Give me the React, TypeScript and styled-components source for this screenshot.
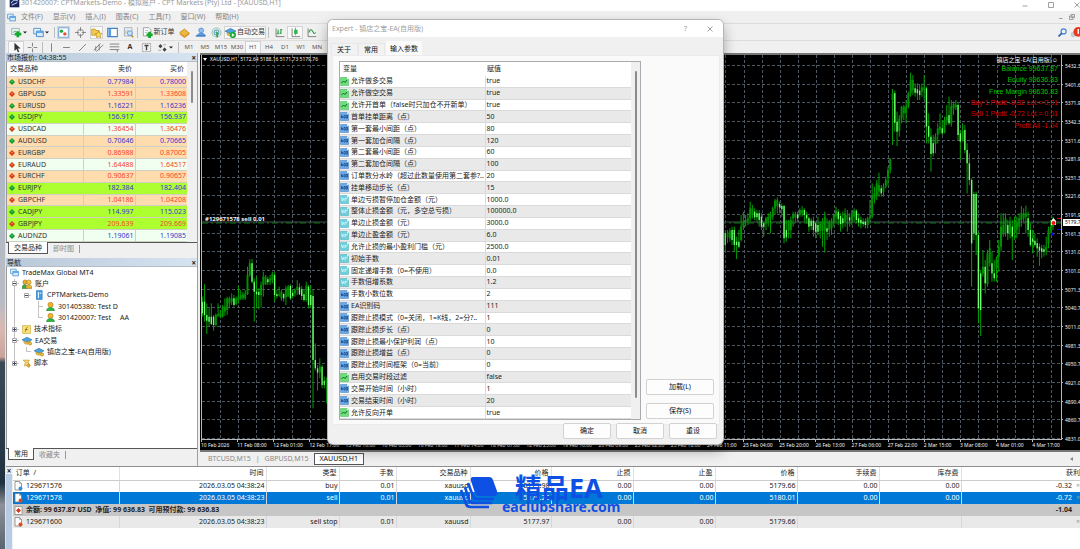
import React from 'react';
import styled, { createGlobalStyle } from 'styled-components';

const GlobalStyle = createGlobalStyle`
  * { box-sizing: border-box; }
  body {
    margin: 0;
    font: 7px/10px "Noto Sans", "Noto Sans CJK SC", sans-serif;
    color: #222;
    overflow: hidden;
  }
  button {
    font: inherit;
    color: inherit;
    background: none;
    border: 0;
    padding: 0;
    margin: 0;
    white-space: nowrap;
  }
  svg { display: block; flex: none; }
  table { border-collapse: collapse; table-layout: fixed; width: 100%; }
  th { font-weight: normal; }
  th, td { padding: 0; white-space: nowrap; overflow: hidden; }
  ul { list-style: none; margin: 0; padding: 0; }
`;

/* ---------- window frame ---------- */

const Desktop = styled.div`
  position: relative;
  display: flex;
  height: 100vh;
  padding-left: 5px;
  overflow: hidden;
  background: linear-gradient(#b4bfcc 0, #aab6c4 20%, #b9bcc4 55%, #d9b9b0 60%, #c9a49b 65%, #3b4a57 66%, #2a3c4a 80%, #1f3140 88%, #8d9199 92%, #5a6570 100%) left / 5px 100% no-repeat;
`;

const AppWindow = styled.div`
  flex: 1;
  min-width: 0;
  display: flex;
  flex-direction: column;
  background: #f0f0f0;
  border-left: 1px solid #dde3ea;
`;

const TitleBar = styled.header`
  display: flex;
  align-items: flex-end;
  height: 11px;
  padding: 0 0 3px 3px;
  background: #fff;
  color: #9a9a9a;
`;

const TitleText = styled.h1`
  flex: 1;
  margin: 0 0 0 1px;
  font-size: 7px;
  font-weight: normal;
  line-height: 10px;
  white-space: nowrap;
`;

const Controls = styled.div<{ $gap: number }>`
  display: flex;
  align-items: center;
  gap: ${(p) => p.$gap}px;
  color: #999;
`;

const MenuBar = styled.nav`
  display: flex;
  align-items: center;
  height: 12px;
  padding: 0 5px 0 1px;
  gap: 5px;
  color: #858585;
`;

const MenuList = styled.div`
  display: flex;
  gap: 10px;
`;

const Spacer = styled.div`
  flex: 1;
`;

const Toolbar = styled.div<{ $h: number }>`
  display: flex;
  align-items: center;
  height: ${(p) => p.$h}px;
  padding-left: 2px;
  border-top: 1px solid #dcdcdc;
`;

const Tool = styled.button<{ $w?: number; $on?: boolean }>`
  display: flex;
  align-items: center;
  justify-content: center;
  width: ${(p) => p.$w ?? 16}px;
  height: 13px;
  gap: 1px;
  color: #333;
  background: ${(p) => (p.$on ? '#f9f9f9' : 'none')};
  box-shadow: ${(p) => (p.$on ? 'inset 0 0 0 1px #d2d2d2' : 'none')};
`;

const Period = styled(Tool)`
  font-size: 6px;
  color: #555;
`;

const Divider = styled.span`
  width: 1px;
  height: 11px;
  margin: 0 2px;
  background: #bdbdbd;
`;

const Workspace = styled.main`
  flex: 1;
  min-height: 0;
  display: flex;
`;

const Sidebar = styled.aside`
  width: 192px;
  display: flex;
  flex-direction: column;
  gap: 4px;
  padding-bottom: 6px;
  border-right: 1px solid #a0a0a0;
  margin-right: 2px;
`;

const SidePanel = styled.section<{ $fill?: boolean }>`
  flex: ${(p) => (p.$fill ? 1 : 'none')};
  display: flex;
  flex-direction: column;
`;

const PanelTitle = styled.h2`
  display: flex;
  align-items: center;
  justify-content: space-between;
  height: 9px;
  margin: 0;
  padding: 0 1px;
  font-size: 7px;
  font-weight: normal;
  line-height: 9px;
  background: linear-gradient(90deg, #b9c8d8, #d6e4f2);
  border-bottom: 1px solid #b5bcc4;
`;

const CloseButton = styled.button`
  font-size: 8px;
  font-weight: bold;
  line-height: 7px;
`;

/* ---------- market watch ---------- */

const MarketBody = styled.div`
  display: flex;
  align-items: flex-start;
  background: #fff;
  border-left: 1px solid #999;
`;

const MarketTable = styled.table`
  height: 180px;
  thead tr { height: 14px; }
  th { text-align: right; border-bottom: 1px solid #ddd; padding-right: 3px; }
  th:first-child { text-align: left; padding-left: 3px; }
`;

const QuoteRow = styled.tr<{ $bg: string; $fg: string }>`
  background: ${(p) => p.$bg};
  td { border-bottom: 1px solid #cfd0c4; border-right: 1px solid #cfd0c4; text-align: right; padding-right: 1px; color: ${(p) => p.$fg}; }
  td:first-child { text-align: left; color: #333; padding-left: 2px; }
  td:last-child { border-right: 0; }
`;

const SymbolCell = styled.span`
  display: flex;
  align-items: center;
  gap: 3px;
`;

const ScrollTrack = styled.div<{ $w: number }>`
  flex: none;
  width: ${(p) => p.$w}px;
  align-self: stretch;
  padding: 9px 3px 0 4px;
  background: #f0f0f0;
`;

const ScrollThumb = styled.div<{ $h: number }>`
  width: 2px;
  height: ${(p) => p.$h}px;
  border-radius: 1px;
  background: #8b8b8b;
`;

const TabStrip = styled.div`
  display: flex;
  height: 12px;
  padding-left: 2px;
  border-top: 1px solid #555;
`;

const StripTab = styled.button<{ $on?: boolean }>`
  height: ${(p) => (p.$on ? 12 : 11)}px;
  margin-top: ${(p) => (p.$on ? -1 : 0)}px;
  padding: 0 5px;
  color: ${(p) => (p.$on ? '#222' : '#8a8a8a')};
  background: ${(p) => (p.$on ? '#fff' : 'none')};
  border: ${(p) => (p.$on ? '1px solid #555' : '0')};
  border-top: 0;
`;

const TabMark = styled.span`
  width: 1px;
  height: 8px;
  margin-top: 2px;
  background: #999;
`;

/* ---------- navigator ---------- */

const Tree = styled.div`
  flex: 1;
  background: #fff;
  border-left: 1px solid #999;
`;

const TreeRows = styled.ul`
  display: grid;
  grid-auto-rows: 1fr;
  height: 102px;
  background:
    linear-gradient(#c4c4c4, #c4c4c4) 7px 12px / 1px 84px no-repeat,
    linear-gradient(#c4c4c4, #c4c4c4) 31px 34px / 1px 17px no-repeat,
    linear-gradient(#c4c4c4, #c4c4c4) 19px 80px / 1px 5px no-repeat;
`;

const TreeItem = styled.li<{ $depth: number }>`
  display: flex;
  align-items: center;
  gap: 3px;
  padding-left: ${(p) => 3 + p.$depth * 12}px;
  white-space: pre;
`;

/* ---------- chart ---------- */

const ChartPane = styled.section`
  flex: 1;
  min-width: 0;
  display: flex;
  flex-direction: column;
`;

const ChartFrame = styled.div`
  flex: 1;
  min-height: 0;
  border: solid #777;
  border-width: 2px 0;
  background: #000;
  overflow: hidden;
`;

const ChartSvg = styled.svg`
  width: 100%;
  height: 100%;
`;

const ChartTabs = styled.div`
  display: flex;
  align-items: center;
  height: 14px;
  padding: 0 7px 1px 8px;
  gap: 5px;
  color: #8a8a8a;
`;

const ChartTab = styled.button<{ $on?: boolean }>`
  height: 12px;
  padding: 0 ${(p) => (p.$on ? 5 : 0)}px;
  color: ${(p) => (p.$on ? '#111' : '#8a8a8a')};
  background: ${(p) => (p.$on ? '#fff' : 'none')};
  border: ${(p) => (p.$on ? '1px solid #555' : '0')};
`;

/* ---------- terminal ---------- */

const Terminal = styled.section`
  display: flex;
  height: 83px;
  border-top: 1px solid #8e8e8e;
`;

const TerminalGrip = styled.div`
  width: 6px;
  margin-right: 1px;
  background: linear-gradient(#f0f0f0 7px, #b7cce4 7px);
  text-align: center;
`;

const TerminalBody = styled.div`
  flex: 1;
  min-width: 0;
  background: #fff;
`;

const OrderTable = styled.table`
  th { height: 13px; border-bottom: 1px solid #ccc; border-right: 1px solid #e2e2e2; text-align: right; padding-right: 2px; }
  th:first-child, td:first-child { text-align: left; padding-left: 1px; }
  th:last-child { border-right: 0; padding-right: 0; }
`;

const OrderRow = styled.tr<{ $tone: 'plain' | 'selected' | 'total' | 'pending' }>`
  height: 12px;
  background: ${(p) => ({ plain: '#fff', selected: '#0078d7', total: '#c6c6c6', pending: '#e9e9e9' })[p.$tone]};
  color: ${(p) => (p.$tone === 'selected' ? '#fff' : '#222')};
  font-weight: ${(p) => (p.$tone === 'total' ? 'bold' : 'normal')};
  td {
    text-align: right;
    padding-right: 1px;
    border-right: ${(p) => (p.$tone === 'total' ? '0' : '1px solid #d4d8dc')};
  }
  td:last-child { border-right: 0; padding-right: 0; }
`;

const OrderId = styled.span`
  display: flex;
  align-items: center;
  gap: 3px;
`;

const Profit = styled.span<{ $bare?: boolean }>`
  display: flex;
  justify-content: flex-end;
  gap: 4px;
  padding-right: ${(p) => (p.$bare ? 8 : 0)}px;
`;

const RowClose = styled.button`
  width: 4px;
  color: #999;
`;

/* ---------- dialog ---------- */

const Dialog = styled.div`
  position: absolute;
  left: 328px;
  top: 20px;
  width: 395px;
  display: flex;
  flex-direction: column;
  border-radius: 5px;
  overflow: hidden;
  background: #f0f0f0;
  box-shadow: 0 0 0 1px #b5b5b5, 0 6px 14px rgba(0, 0, 0, 0.35);
`;

const DialogTitle = styled.div`
  display: flex;
  align-items: center;
  height: 17px;
  padding: 0 10px 0 4px;
  background: #fff;
  color: #a0a0a0;
`;

const DialogTabs = styled.div`
  display: flex;
  align-items: flex-end;
  height: 18px;
  padding-left: 4px;
`;

const DialogTab = styled.button<{ $on?: boolean }>`
  height: ${(p) => (p.$on ? 14 : 12)}px;
  padding: 0 ${(p) => (p.$on ? 3 : 6)}px 0 ${(p) => (p.$on ? 3 : 5)}px;
  margin-left: ${(p) => (p.$on ? 0 : -1)}px;
  margin-right: 1px;
  color: #111;
  background: ${(p) => (p.$on ? '#fafafa' : '#f2f2f2')};
  border: 1px solid ${(p) => (p.$on ? '#fafafa' : '#e8e8e8')};
  border-bottom: 0;
`;

const DialogPage = styled.div`
  display: flex;
  height: 370px;
  margin: 0 3px 0 4px;
  padding: 5px 5px 4px 6px;
  gap: 5px;
  background: #fafafa;
  border: 1px solid #ececec;
`;

const ListBox = styled.div`
  width: 302px;
  display: flex;
  border: 1px solid #a9a9b0;
  background: #fff;
`;

const InputTable = styled.table`
  height: 357px;
  thead tr { height: 14px; }
  th { text-align: left; padding-left: 3px; }
  td { border-bottom: 1px solid #dadada; }
  td:first-child { padding-left: 0; border-right: 1px solid #dadada; }
  td:last-child { padding-left: 1px; }
  tbody tr:nth-child(even) { background: #e9e9e9; }
  th:last-child { padding-left: 2px; }
`;

const Param = styled.span`
  display: flex;
  align-items: center;
  gap: 2px;
`;

const SideButtons = styled.div`
  flex: 1;
  display: flex;
  flex-direction: column;
  justify-content: flex-end;
  gap: 8px;
  padding-bottom: 1px;
`;

const DialogFooter = styled.div`
  display: flex;
  justify-content: flex-end;
  align-items: flex-start;
  gap: 5px;
  height: 19px;
  padding-right: 6px;
`;

const PushButton = styled.button<{ $w?: number }>`
  width: ${(p) => (p.$w ? p.$w + 'px' : '100%')};
  height: 16px;
  margin-top: ${(p) => (p.$w ? -2 : 0)}px;
  color: #111;
  background: #fdfdfd;
  border: 1px solid #d2d2d2;
  border-radius: 2px;
`;

/* ---------- watermark ---------- */

const Watermark = styled.div`
  position: absolute;
  left: 460px;
  top: 475px;
  display: flex;
  gap: 4px;
  color: #0f50e4;
  font-weight: bold;
`;

const WatermarkText = styled.div`
  font-size: 14px;
  line-height: 14px;
`;

const WatermarkName = styled.div`
  padding-left: 13px;
  font-size: 27px;
  line-height: 25px;
`;

/* ---------- icons ---------- */

const Svg = ({ s = 11, children }: { s?: number; children: React.ReactNode }) => (
  <svg width={s} height={s} viewBox="0 0 16 16" fill="none" aria-hidden="true">{children}</svg>
);

const Diamond = ({ up }: { up: boolean }) => (
  <svg width="6" height="6" viewBox="0 0 12 12" aria-hidden="true">
    <path d="M6 0 12 6 6 12 0 6Z" fill={up ? '#129a30' : '#d83c14'} />
    <path d="M6 3 8 5 6 7 4 5Z" fill={up ? '#5fd070' : '#f58a60'} />
  </svg>
);

const Caret = () => (
  <svg width="4" height="3" viewBox="0 0 8 6" aria-hidden="true"><path d="M0 1H8L4 5Z" fill="#222" /></svg>
);

const Twig = ({ box }: { box?: 'plus' | 'minus' }) => (
  <svg width="9" height="9" viewBox="0 0 9 9" fill="none" aria-hidden="true">
    <path d="M4 4.500H9" stroke="#c4c4c4" />
    {box && <path d="M2.500 2.500H6.500V6.500H2.500Z" fill="#fff" stroke="#a8a8a8" />}
    {box && <path d="M3 4.500H6" stroke="#446" />}
    {box === 'plus' && <path d="M4.500 3V6" stroke="#446" />}
  </svg>
);

const ParamIcon = ({ kind }: { kind: 'b' | 'i' | 'd' }) => {
  const bg = { b: '#6ede7c', i: '#6ba8e4', d: '#6fcfdc' }[kind];
  const edge = { b: '#3cb24e', i: '#3c7cc0', d: '#3fa9b8' }[kind];
  return (
    <svg width="9" height="9" viewBox="0 0 18 18" fill="none" aria-hidden="true">
      <path d="M1 1H14L17 4V17H1Z" fill={bg} stroke={edge} />
      <path d="M14 1V4H17Z" fill="#fff" />
      {kind === 'b' && <path d="M3 12 7 8 10 11 14 6" stroke="#0c6a20" strokeWidth="2" />}
      {kind === 'i' && <path d="M3 12V7L6 12V7M8 7H10V12H8M12 7H15V12H12Z" stroke="#0b3c80" strokeWidth="1.4" />}
      {kind === 'd' && <path d="M3 5 5 12 8 6M10 12V7L12 6M12 9 15 5" stroke="#e9ffff" strokeWidth="1.6" />}
    </svg>
  );
};

const DocIcon = ({ dot }: { dot: string }) => (
  <svg width="9" height="10" viewBox="0 0 18 20" fill="none" aria-hidden="true">
    <path d="M2 1H11L15 5V18H2Z" fill="#fff" stroke="#777" strokeWidth="1.5" />
    <path d="M11 1V5H15" stroke="#777" />
    <circle cx="13" cy="15" r="4" fill={dot} />
  </svg>
);

const BalanceIcon = () => (
  <svg width="9" height="9" viewBox="0 0 18 18" fill="none" aria-hidden="true">
    <path d="M2 1H16V17H2Z" fill="#fff" stroke="#888" strokeWidth="1.5" />
    <path d="M9 4 14 9 9 14 4 9Z" fill="#d8391a" />
  </svg>
);

const Windows = ({ s = 11 }: { s?: number }) => (
  <Svg s={s}>
    <path d="M1 2H11V10H1Z" fill="#e6f3ff" stroke="#4a90d0" strokeWidth="1.3" />
    <path d="M5 6H15V14H5Z" fill="#d5eaff" stroke="#3f86c8" strokeWidth="1.3" />
    <path d="M5 7.500H15" stroke="#4a9be4" strokeWidth="2" />
  </Svg>
);

const NewChart = () => (
  <Svg><path d="M1 2H12V11H1Z" fill="#e8f4e8" stroke="#7a9bb8" /><path d="M3 8 6 6 9 8" stroke="#3a8a50" /><path d="M10 6V15M5.500 10.500H15" stroke="#12a92c" strokeWidth="4" /></Svg>
);
const MarketIcon = () => (
  <Svg><path d="M1 1H15V15H1Z" fill="#fff" stroke="#6ba3d6" strokeWidth="1.5" /><circle cx="5" cy="6" r="2.500" fill="#20a840" /><circle cx="10" cy="10" r="2.500" fill="#e0502a" /></Svg>
);
const Target = () => (
  <Svg><circle cx="8" cy="8" r="4.500" stroke="#777" strokeWidth="1.2" /><path d="M8 0V6M8 10V16M0 8H6M10 8H16" stroke="#777" strokeWidth="1.2" /></Svg>
);
const Stars = () => (
  <Svg><path d="M1 3H6L7 5H12V12H1Z" fill="#f2cb55" stroke="#b98a1c" /><path d="m11 6 1.500 3 3.500.5-2.500 2.500.5 3.500-3-1.500-3 1.500.5-3.500L6 9.500 9.500 9Z" fill="#ffdf52" stroke="#b98a1c" /></Svg>
);
const Panel = () => (
  <Svg><path d="M1 2H15V14H1Z" fill="#fff" stroke="#4482c4" strokeWidth="1.5" /><path d="M2 3H6V13H2Z" fill="#5c9de0" /></Svg>
);
const Tester = () => (
  <Svg><path d="M2 1H13V13H2Z" fill="#e8f0f8" stroke="#89a" /><path d="M4 10V5M7 10V4M10 9V6" stroke="#c99b30" /><circle cx="10" cy="9" r="3.500" fill="#c8e4fb" stroke="#4482c4" /><path d="m12 12 3 3" stroke="#c08a20" strokeWidth="2" /></Svg>
);
const NewOrder = () => (
  <Svg><path d="M2 1H10L13 4V13H2Z" fill="#fff" stroke="#788" /><path d="M4 5H9M4 8H8" stroke="#9ab" /><path d="M11 7V16M6.500 11.500H15.500" stroke="#12a92c" strokeWidth="4" /></Svg>
);
const Book = () => (
  <Svg><path d="M1 8 8 3 15 9 8 14Z" fill="#f0b73a" stroke="#b37a12" /><path d="M1 9V11L8 16 15 11V9L8 14Z" fill="#d8922a" /></Svg>
);
const Community = () => (
  <Svg><circle cx="9" cy="5" r="3.500" fill="#8fc2f2" stroke="#3c7cc8" /><path d="M3 13C3 8 15 8 15 13Z" fill="#5d9fe8" stroke="#3c7cc8" /><path d="M1 13H15" stroke="#4a7fc0" strokeWidth="2" /></Svg>
);
const Signal = () => (
  <Svg><circle cx="8" cy="8" r="6.500" stroke="#9cc6b4" strokeWidth="1.500" /><circle cx="8" cy="8" r="3.500" stroke="#5aa0c8" strokeWidth="1.500" /><path d="M9 8V15" stroke="#2ba845" strokeWidth="2.500" /><circle cx="8" cy="8" r="1.500" fill="#2ba845" /></Svg>
);
const Hat = ({ s = 11, play = false }: { s?: number; play?: boolean }) => (
  <Svg s={s}><path d="M0 6 8 2 16 6 8 10Z" fill="#4aa3dc" stroke="#2c74a8" /><path d="M3 8V11C6 14 10 14 13 11V8L8 10Z" fill="#e8bd48" stroke="#a8801c" strokeWidth=".7" />{play ? <><circle cx="11.500" cy="11.500" r="4.500" fill="#1cae3a" /><path d="M10 9V14L14 11.500Z" fill="#fff" /></> : <circle cx="13" cy="12" r="2.500" fill="#f0c04a" stroke="#a8801c" />}</Svg>
);
const Bars = () => (
  <Svg><path d="M3 2V14H15" stroke="#555" /><path d="M6 4V11M6 9H4M10 3V10M10 4H12M8 9H10" stroke="#1e9a38" strokeWidth="1.500" /></Svg>
);
const Candles = () => (
  <Svg><path d="M3 2V14H15" stroke="#555" /><path d="M8 1V12" stroke="#1e9a38" /><path d="M6 4H11V10H6Z" fill="#28b848" /></Svg>
);
const LineChart = () => (
  <Svg><path d="M3 2V14H15" stroke="#555" /><path d="M4 8C6 3 8 3 10 7S13 9 14 8" stroke="#1e9a38" strokeWidth="1.500" /></Svg>
);
const Cursor = () => <Svg><path d="M5 1V13L8 10 10 15 12 14 10 9.500H14Z" fill="#333" /></Svg>;
const Cross = () => <Svg><path d="M8 1V6.500M8 9.500V15M1 8H6.500M9.500 8H15" stroke="#888" strokeWidth="1.500" /></Svg>;
const Stroke = ({ d }: { d: string }) => <Svg><path d={d} stroke="#777" strokeWidth="1.300" /></Svg>;
const Account = () => (
  <Svg s={9}><circle cx="8" cy="5" r="4.500" fill="#f4b52c" stroke="#a87010" /><path d="M1 15.500C1 8 15 8 15 15.500Z" fill="#2cba40" stroke="#168028" /></Svg>
);
const Accounts = () => (
  <Svg s={10}><circle cx="5" cy="5" r="3.500" fill="#e9a92c" stroke="#a87818" /><circle cx="11" cy="5" r="3.500" fill="#f4c548" stroke="#a87818" /><path d="M0 15C0 7 8 7 9 15Z" fill="#35a848" stroke="#1c7a30" /><path d="M6 15C6 7 16 7 16 15Z" fill="#e8b630" stroke="#a87818" /></Svg>
);
const Server = () => (
  <Svg s={10}><path d="M4 1H13V15H4Z" fill="#3fa0ea" stroke="#1c6cb8" /><path d="M7 3V13M9 5H12" stroke="#fff" strokeWidth="1.500" /></Svg>
);
const Fx = () => (
  <Svg s={9}><path d="M1 1H15V15H1Z" fill="#fae27a" stroke="#c39b20" /><path d="M10 4C7 3 8 12 5 12M5 8H10" stroke="#7a5a08" strokeWidth="1.300" /></Svg>
);
const Script = () => (
  <Svg s={9}><path d="M2 2H13L11 5 13 12H4L6 6Z" fill="#f4d362" stroke="#b08a20" /><path d="M12 8 15 12 12 15 9 12Z" fill="#e8a83a" stroke="#a87818" /></Svg>
);
const WinGlyph = ({ d }: { d: string }) => (
  <svg width="6" height="6" viewBox="0 0 12 12" fill="none" aria-hidden="true"><path d={d} stroke="#8a8a8a" strokeWidth="1.600" /></svg>
);

/* ---------- data ---------- */

const menus = ['文件(F)', '显示(V)', '插入(I)', '图表(C)', '工具(T)', '窗口(W)', '帮助(H)'];
const periods = ['M1', 'M5', 'M15', 'M30', 'H1', 'H4', 'D1', 'W1', 'MN'];

const PEACH = '#ffdcae';
const LIME = '#adff2f';
const MINT = '#f0fff0';
const quotes: [string, string, string, boolean, string][] = [
  ['USDCHF', '0.77984', '0.78000', true, PEACH],
  ['GBPUSD', '1.33591', '1.33608', false, PEACH],
  ['EURUSD', '1.16221', '1.16236', true, PEACH],
  ['USDJPY', '156.917', '156.937', true, LIME],
  ['USDCAD', '1.36454', '1.36476', false, MINT],
  ['AUDUSD', '0.70646', '0.70665', true, PEACH],
  ['EURGBP', '0.86988', '0.87005', false, PEACH],
  ['EURAUD', '1.64488', '1.64517', false, MINT],
  ['EURCHF', '0.90637', '0.90657', false, PEACH],
  ['EURJPY', '182.384', '182.404', true, LIME],
  ['GBPCHF', '1.04186', '1.04208', false, PEACH],
  ['CADJPY', '114.997', '115.023', true, LIME],
  ['GBPJPY', '209.639', '209.669', false, LIME],
  ['AUDNZD', '1.19061', '1.19085', true, MINT],
];

const params: ['b' | 'i' | 'd', string, string][] = [
  ['b', '允许做多交易', 'true'],
  ['b', '允许做空交易', 'true'],
  ['b', '允许开首单（false时只加仓不开新单）', 'true'],
  ['i', '首单挂单距离（点）', '50'],
  ['i', '第一套最小间距（点）', '80'],
  ['i', '第一套加仓间隔（点）', '120'],
  ['i', '第二套最小间距（点）', '60'],
  ['i', '第二套加仓间隔（点）', '100'],
  ['i', '订单数分水岭（超过此数量使用第二套参?..', '20'],
  ['i', '挂单移动步长（点）', '15'],
  ['d', '单边亏损暂停加仓金额（元）', '1000.0'],
  ['d', '整体止损金额（元，多空总亏损）', '100000.0'],
  ['d', '单边止损金额（元）', '3000.0'],
  ['d', '单边止盈金额（元）', '6.0'],
  ['d', '允许止损的最小盈利门槛（元）', '2500.0'],
  ['d', '初始手数', '0.01'],
  ['d', '固定递增手数（0=不使用）', '0.0'],
  ['d', '手数倍增系数', '1.2'],
  ['i', '手数小数位数', '2'],
  ['i', 'EA识别码', '111'],
  ['i', '跟踪止损模式（0=关闭，1=K线，2=分?..', '1'],
  ['i', '跟踪止损步长（点）', '0'],
  ['i', '跟踪止损最小保护利润（点）', '10'],
  ['i', '跟踪止损增益（点）', '0'],
  ['i', '跟踪止损时间框架（0=当前）', '0'],
  ['b', '启用交易时段过滤', 'false'],
  ['i', '交易开始时间（小时）', '1'],
  ['i', '交易结束时间（小时）', '20'],
  ['b', '允许反向开单', 'true'],
];

const prices = ['5432.3', '5401.6', '5371.9', '5342.3', '5311.6', '5281.9', '5251.3', '5221.6', '5191.9', '5161.3', '5131.0', '5101.0', '5071.3', '5040.7', '5011.0', '4981.3', '4950.7', '4921.0', '4890.4', '4860.7', '4831.0'];
const times = ['10 Feb 2026', '11 Feb 08:00', '12 Feb 01:00', '12 Feb 17:00', '13 Feb 10:00', '16 Feb 03:00', '16 Feb 19:00', '17 Feb 14:00', '18 Feb 07:00', '18 Feb 23:00', '19 Feb 16:00', '20 Feb 09:00', '23 Feb 02:00', '23 Feb 18:00', '24 Feb 11:00', '25 Feb 04:00', '25 Feb 20:00', '26 Feb 13:00', '27 Feb 06:00', '27 Feb 22:00', '2 Mar 15:00', '3 Mar 08:00', '4 Mar 01:00', '4 Mar 17:00'];

/* high, low, body top, body bottom; three units to a pixel */
const early = '740,800,755,790 703,815,755,795 760,852,795,812 775,830,800,815 760,825,800,822 795,842,800,825 790,830,795,825 760,800,793,798 780,805,790,800 765,803,770,800 745,798,770,785 740,795,745,780 740,775,745,760 730,765,745,755 735,770,745,765 740,765,745,762 708,760,740,750 720,750,735,745 725,750,733,745 720,750,730,745 650,735,675,732 628,680,640,676 627,700,640,695 685,815,695,725 680,775,725,733 715,778,725,735 695,772,705,735 665,740,680,705 675,705,680,702 680,705,688,697 675,705,685,695 665,700,672,690 668,755,675,735 720,745,733,738 710,740,733,737 718,752,725,745 728,755,732,745 708,765,715,742 705,740,710,740 703,750,708,745 720,745,728,738 715,740,720,730 690,735,710,720 700,735,712,733 708,750,718,738 720,755,733,750 695,755,708,750 705,775,710,765 705,775,735,765 720,1075,738,930 880,962,930,955 945,1022,955,968 925,985,950,968 945,1015,950,1005 980,1015,992,1005 982,1060,990,1000';
const late = '690,755,700,735 690,730,698,712 685,725,692,715 680,735,690,720 680,755,690,735 710,777,725,735 690,745,725,740 645,725,680,720 635,690,665,680 645,680,660,665 640,675,655,662 605,665,625,655 615,655,625,645 625,660,635,652 630,665,640,652 630,680,640,660 640,690,650,680 665,710,670,680 650,690,655,670 640,680,650,662 635,700,645,655 620,660,625,650 597,645,602,625 593,640,600,618 605,640,612,622 610,650,618,628 615,730,618,715 660,725,690,712 660,715,665,692 650,715,660,690 635,680,645,655 635,665,643,653 635,665,643,655 625,650,630,645 618,650,630,640 625,665,630,645 635,670,645,655 650,695,655,680 655,690,662,678 650,710,662,690 665,715,670,695 650,705,675,695 665,715,672,692 655,740,665,693 635,758,650,692 655,720,685,695 660,710,665,690 655,705,662,685 640,680,645,663 620,665,632,650 628,675,635,658 640,695,648,672 635,685,655,670 625,680,640,665 630,695,645,660 640,680,652,662 630,675,640,660 625,665,632,650 628,670,632,660 640,680,655,668 650,685,660,670 655,680,665,672 655,685,665,675 650,685,655,675 600,665,650,655 550,655,585,650 560,610,580,595 540,600,550,588 518,590,555,575 555,590,565,580 550,590,560,575 530,565,540,560 500,555,510,535 475,520,478,510 267,435,280,300 272,395,280,368 335,438,365,395 345,410,355,393 318,370,320,355 315,360,320,340 300,370,320,340 275,325,280,320 218,290,240,280 225,285,240,270 250,290,265,278 250,300,268,280 255,300,272,285 250,290,262,275 225,300,262,270 260,430,265,380 340,430,378,410 385,515,410,462 405,470,430,460 400,460,410,432 370,430,385,405 340,400,380,390 360,405,385,400 350,400,360,398 315,375,350,362 290,375,345,370 300,380,318,370 305,345,312,325 300,330,315,322 310,420,315,405 390,480,400,425 370,425,392,420 375,460,390,450 430,580,450,490 460,555,490,540 535,860,540,730 575,720,582,700 575,765,582,705 700,970,705,925 810,1008,820,930 750,830,800,820 780,880,800,850 750,860,760,852 720,800,745,790 755,845,790,820 780,845,820,835 770,845,775,805 720,815,740,770 640,755,680,740 640,710,675,700 640,710,655,700 660,720,675,700 650,715,665,700 660,780,680,710 650,720,670,690 650,715,665,690 640,700,655,680 618,680,640,660 625,665,640,655 617,700,640,650 635,710,655,690 670,740,690,735 690,760,715,725 700,740,722,735 715,770,730,745 730,798,740,752 735,775,745,755 735,770,748,755 710,765,740,752 680,745,690,730 660,700,680,690 650,690,665,680';

type Bar = { x: number; h: number; l: number; t: number; b: number; up: boolean };
const bars = (src: string, x0: number, y0: number): Bar[] => {
  let prev = 0;
  return src.split(' ').map((row, i) => {
    const [h, l, t, b] = row.split(',').map((n) => Number(n) / 3 + y0);
    const up = (t + b) / 2 <= prev;
    prev = (t + b) / 2;
    return { x: x0 + i * 2.26, h, l, t, b, up };
  });
};
const allBars = [...bars(early, 202.3, 50), ...bars(late, 725.3, 0)];

const seq = (n: number) => Array.from({ length: n }, (_, i) => i);
const gridX = (i: number) => Math.round(219.5 + i * 18.07) + 0.5;
const gridY = (i: number) => Math.round(65 + i * 18.64) + 0.5;

const Chart = () => (
  <ChartSvg viewBox="200 55 880 395" preserveAspectRatio="xMaxYMin slice" role="img" aria-label="XAUUSD,H1">
    <g stroke="#4c5762" strokeWidth="1" strokeDasharray="3 2">
      {seq(47).map((i) => <path key={i} d={`M${gridX(i)} 55V440`} />)}
      {seq(21).map((i) => <path key={i} d={`M202 ${gridY(i)}H1061`} />)}
    </g>
    <path d="M202 222H1061" stroke="#4a555c" />
    <path d="M202 223H1061" stroke="#0c7a14" strokeDasharray="6 3 2 3" />
    {allBars.map((c, i) => (
      <g key={i}>
        <path d={`M${c.x} ${c.h}V${c.l}`} stroke="#00a000" strokeWidth="1" />
        <path d={`M${c.x} ${c.t}V${Math.max(c.b, c.t + 1)}`} stroke={c.up ? '#009000' : '#6dff6d'} strokeWidth={c.up ? 2 : 1.4} />
      </g>
    ))}
    <path d="M201.500 55V440M201 439.500H1062M1061.500 55V440" stroke="#b8b8b8" />
    {seq(21).map((i) => <path key={i} d={`M1061 ${gridY(i)}H1063`} stroke="#b8b8b8" />)}
    {times.map((t, i) => <path key={t} d={`M${Math.round(201 + i * 36.14) + 0.5} 440V442`} stroke="#b8b8b8" />)}
    <g fill="#f4f4f4" fontFamily="'Noto Sans', sans-serif" fontSize="5">
      {prices.map((p, i) => <text key={p} x="1065" y={gridY(i) + 2}>{p}</text>)}
      {times.map((t, i) => <text key={t} x={201 + i * 36.14} y="447">{t}</text>)}
      <path d="M203 58H207L205 61Z" />
      <text x="210" y="61">XAUUSD,H1&#160; 5172.64 5188.16 5171.73 5179.76</text>
      <text x="205" y="221" fontSize="6" fontWeight="bold">#129671578 sell 0.01</text>
      <text x="1058" y="62" fontSize="6" textAnchor="end" fontFamily="'Noto Sans CJK SC', sans-serif">镇店之宝-EA(自用版)☺</text>
    </g>
    <g fill="#00c400" fontFamily="'Liberation Sans', sans-serif" fontSize="7" textAnchor="end">
      <text x="1058" y="71">Balance 99637.87</text>
      <text x="1058" y="82">Equity 99636.83</text>
      <text x="1058" y="94">Free Margin 99636.83</text>
      <g fill="#d80000">
        <text x="1058" y="105">Buy 1 Profit -0.32 Lot = 0.01</text>
        <text x="1058" y="116">Sell 1 Profit -0.72 Lot = 0.01</text>
        <text x="1058" y="128">Profit All -1.04</text>
      </g>
    </g>
    <path d="M1057 218.500H1061" stroke="#d00" />
    <path d="M1057 229.500H1061" stroke="#00d" />
    <path d="M1053.500 218 1056 221V225H1051V221Z" fill="#fff" />
    <circle cx="1053.500" cy="223" r="2" fill="#f01010" />
    <circle cx="1052.500" cy="234" r="1.500" fill="#1010ff" />
    <path d="M1063 219H1080V226H1063Z" fill="#fff" />
    <text x="1065" y="224" fontFamily="'Noto Sans', sans-serif" fontSize="5" fill="#000">5179.7</text>
  </ChartSvg>
);

const orderCols = [106, 147, 73, 57, 74, 81, 82, 82, 82, 82, 82];
const orderHeads = ['时间', '类型', '手数', '交易品种', '价格', '止损', '止盈', '价格', '手续费', '库存费', '获利'];

const App = () => (
  <>
    <GlobalStyle />
    <Desktop lang="zh-CN">
      <AppWindow>
        <TitleBar>
          <Svg><path d="M1 1H15V15H1Z" fill="#1a2358" /><path d="M3 9C6 4 10 4 13 6M4 12 12 8" stroke="#b9c6f0" strokeWidth="1.500" /></Svg>
          <TitleText>301420007: CPTMarkets-Demo - 模拟账户 - CPT Markets (Pty) Ltd - [XAUUSD,H1]</TitleText>
          <Controls $gap={20}>
            <button aria-label="最小化"><WinGlyph d="M1 8H11" /></button>
            <button aria-label="最大化"><WinGlyph d="M1 1H11V11H1Z" /></button>
            <button aria-label="关闭"><WinGlyph d="M1 1 11 11M11 1 1 11" /></button>
          </Controls>
        </TitleBar>
        <MenuBar>
          <Windows s={9} />
          <MenuList>{menus.map((m) => <button key={m}>{m}</button>)}</MenuList>
          <Spacer />
          <Controls $gap={5}>
            <button aria-label="还原"><WinGlyph d="M2 9H9" /></button>
            <button aria-label="层叠"><WinGlyph d="M4 1H11V7H4ZM1 4H8V11H1Z" /></button>
          </Controls>
        </MenuBar>
        <Toolbar $h={17}>
          <Tool $w={22} aria-label="新图表"><NewChart /><Caret /></Tool>
          <Tool $w={22} aria-label="模板"><Windows /><Caret /></Tool>
          <Divider />
          <Tool $w={13} $on aria-label="市场报价"><MarketIcon /></Tool>
          <Tool $w={20} aria-label="数据窗口"><Target /></Tool>
          <Tool $w={13} $on aria-label="导航"><Stars /></Tool>
          <Tool $w={18} aria-label="终端"><Panel /></Tool>
          <Tool $w={14} aria-label="测试"><Tester /></Tool>
          <Divider />
          <Tool $w={36}><NewOrder />新订单</Tool>
          <Tool $w={16} aria-label="编辑器"><Book /></Tool>
          <Tool aria-label="社区"><Community /></Tool>
          <Tool aria-label="信号"><Signal /></Tool>
          <Tool $w={42} $on><Hat play />自动交易</Tool>
          <Divider />
          <Tool aria-label="柱状图"><Bars /></Tool>
          <Tool $on aria-label="蜡烛图"><Candles /></Tool>
          <Tool aria-label="折线图"><LineChart /></Tool>
          <Spacer />
          <Tool aria-label="搜索"><Svg s={9}><circle cx="10" cy="6" r="4.500" stroke="#3f7fd8" strokeWidth="2" /><path d="M7 9 1 15" stroke="#3060b0" strokeWidth="3" /></Svg></Tool>
          <Tool $w={10} aria-label="通知"><Svg><circle cx="5" cy="11" r="4" fill="#c8ccd0" /><circle cx="12" cy="7" r="7" fill="#e8381c" /><path d="M12 3V10" stroke="#fff" strokeWidth="2" /></Svg></Tool>
        </Toolbar>
        <Toolbar $h={13}>
          <Tool $on aria-label="光标"><Cursor /></Tool>
          <Tool aria-label="十字"><Cross /></Tool>
          <Divider />
          <Tool $w={13} aria-label="垂直线"><Stroke d="M8 2V14" /></Tool>
          <Tool aria-label="水平线"><Stroke d="M3 8H13" /></Tool>
          <Tool aria-label="趋势线"><Stroke d="M3 13 13 3" /></Tool>
          <Tool aria-label="通道"><Stroke d="M1 12 11 2M5 14 15 4M4 6V13M9 3V12" /></Tool>
          <Tool aria-label="回调线"><Stroke d="M1 3H15M1 7H15M1 11H15M12 11V15" /></Tool>
          <Tool aria-label="文字"><b>A</b></Tool>
          <Tool aria-label="标签"><Svg><path d="M2 2H14V14H2Z" stroke="#777" strokeDasharray="2 1" /><path d="M5 5H11M8 5V12" stroke="#444" strokeWidth="2" /></Svg></Tool>
          <Tool $w={22} aria-label="箭头"><Svg><path d="M5 3 8 6 5 9 2 6ZM11 8 14 11 11 14 8 11Z" fill="#444" /><path d="m9 4 4 0M2 12h4" stroke="#888" /></Svg><Caret /></Tool>
          <Divider />
          {periods.map((p) => <Period key={p} $on={p === 'H1'}>{p}</Period>)}
        </Toolbar>

        <Workspace>
          <Sidebar>
            <SidePanel>
              <PanelTitle>市场报价: 04:38:55<CloseButton aria-label="关闭市场报价">×</CloseButton></PanelTitle>
              <MarketBody>
                <MarketTable>
                  <colgroup><col /><col width="52" /><col width="52" /></colgroup>
                  <thead><tr><th>交易品种</th><th>卖价</th><th>买价</th></tr></thead>
                  <tbody>
                    {quotes.map(([s, bid, ask, up, bg]) => (
                      <QuoteRow key={s} $bg={bg} $fg={up ? '#3535d0' : '#f8432c'}>
                        <td><SymbolCell><Diamond up={up} />{s}</SymbolCell></td>
                        <td>{bid}</td>
                        <td>{ask}</td>
                      </QuoteRow>
                    ))}
                  </tbody>
                </MarketTable>
                <ScrollTrack $w={10}><ScrollThumb $h={32} /></ScrollTrack>
              </MarketBody>
              <TabStrip><StripTab $on>交易品种</StripTab><StripTab>即时图</StripTab><TabMark /></TabStrip>
            </SidePanel>
            <SidePanel $fill>
              <PanelTitle>导航<CloseButton aria-label="关闭导航">×</CloseButton></PanelTitle>
              <Tree>
                <TreeRows>
                  <TreeItem $depth={0}><Windows s={9} />TradeMax Global MT4</TreeItem>
                  <TreeItem $depth={0}><Twig box="minus" /><Accounts />账户</TreeItem>
                  <TreeItem $depth={1}><Twig box="minus" /><Server />CPTMarkets-Demo</TreeItem>
                  <TreeItem $depth={2}><Twig /><Account />301405380: Test D</TreeItem>
                  <TreeItem $depth={2}><Twig /><Account />301420007: Test     AA</TreeItem>
                  <TreeItem $depth={0}><Twig box="plus" /><Fx />技术指标</TreeItem>
                  <TreeItem $depth={0}><Twig box="minus" /><Hat s={10} />EA交易</TreeItem>
                  <TreeItem $depth={1}><Twig /><Hat s={10} />镇店之宝-EA(自用版)</TreeItem>
                  <TreeItem $depth={0}><Twig box="plus" /><Script />脚本</TreeItem>
                </TreeRows>
              </Tree>
              <TabStrip><StripTab $on>常用</StripTab><StripTab>收藏夹</StripTab><TabMark /></TabStrip>
            </SidePanel>
          </Sidebar>
          <ChartPane>
            <ChartFrame><Chart /></ChartFrame>
            <ChartTabs>
              <ChartTab>BTCUSD,M15</ChartTab>|<ChartTab>GBPUSD,M15</ChartTab><ChartTab $on>XAUUSD,H1</ChartTab>
              <Spacer />
              <svg width="3" height="4" viewBox="0 0 3 4" aria-hidden="true"><path d="M3 0V4L0 2Z" fill="#888" /></svg>
            </ChartTabs>
          </ChartPane>
        </Workspace>

        <Terminal>
          <TerminalGrip><CloseButton aria-label="关闭终端">×</CloseButton></TerminalGrip>
          <TerminalBody>
            <OrderTable>
              <colgroup>{orderCols.map((w, i) => <col key={i} width={w} />)}<col /></colgroup>
              <thead>
                <tr><th>&#160;订单 &#160;/</th>{orderHeads.map((h, i) => <th key={i}>{h}</th>)}</tr>
              </thead>
              <tbody>
                <OrderRow $tone="plain">
                  <td><OrderId><DocIcon dot="#2a8fdc" />129671576</OrderId></td>
                  <td>2026.03.05 04:38:24</td><td>buy</td><td>0.01</td><td>xauusd</td><td>5179.98</td><td>0.00</td><td>0.00</td><td>5179.66</td><td>0.00</td><td>0.00</td>
                  <td><Profit>-0.32<RowClose>×</RowClose></Profit></td>
                </OrderRow>
                <OrderRow $tone="selected">
                  <td><OrderId><DocIcon dot="#e2481c" />129671578</OrderId></td>
                  <td>2026.03.05 04:38:23</td><td>sell</td><td>0.01</td><td>xauusd</td><td>5179.29</td><td>0.00</td><td>0.00</td><td>5180.01</td><td>0.00</td><td>0.00</td>
                  <td><Profit>-0.72<RowClose>×</RowClose></Profit></td>
                </OrderRow>
                <OrderRow $tone="total">
                  <td colSpan={11}><OrderId><BalanceIcon />余额: 99 637.87 USD&#160; 净值: 99 636.83&#160; 可用预付款: 99 636.83</OrderId></td>
                  <td><Profit $bare>-1.04</Profit></td>
                </OrderRow>
                <OrderRow $tone="pending">
                  <td><OrderId><DocIcon dot="#e2481c" />129671600</OrderId></td>
                  <td>2026.03.05 04:38:23</td><td>sell stop</td><td>0.01</td><td>xauusd</td><td>5177.97</td><td>0.00</td><td>0.00</td><td>5179.66</td><td colSpan={2}></td>
                  <td><Profit><RowClose>×</RowClose></Profit></td>
                </OrderRow>
              </tbody>
            </OrderTable>
          </TerminalBody>
        </Terminal>
      </AppWindow>

      <Dialog role="dialog" aria-label="Expert">
        <DialogTitle>
          Expert - 镇店之宝-EA(自用版)
          <Spacer />
          <Controls $gap={20}>
            <button aria-label="帮助">?</button>
            <button aria-label="关闭"><WinGlyph d="M1 1 11 11M11 1 1 11" /></button>
          </Controls>
        </DialogTitle>
        <DialogTabs>
          <DialogTab>关于</DialogTab>
          <DialogTab>常用</DialogTab>
          <DialogTab $on>输入参数</DialogTab>
        </DialogTabs>
        <DialogPage>
          <ListBox>
            <InputTable>
              <colgroup><col width="145" /><col /></colgroup>
              <thead><tr><th>变量</th><th>赋值</th></tr></thead>
              <tbody>
                {params.map(([k, name, value]) => (
                  <tr key={name}><td><Param><ParamIcon kind={k} />{name}</Param></td><td>{value}</td></tr>
                ))}
              </tbody>
            </InputTable>
            <ScrollTrack $w={9}><ScrollThumb $h={327} /></ScrollTrack>
          </ListBox>
          <SideButtons>
            <PushButton>加载(L)</PushButton>
            <PushButton>保存(S)</PushButton>
          </SideButtons>
        </DialogPage>
        <DialogFooter>
          <PushButton $w={48}>确定</PushButton>
          <PushButton $w={48}>取消</PushButton>
          <PushButton $w={48}>重设</PushButton>
        </DialogFooter>
      </Dialog>

      <Watermark>
        <svg width="38" height="34" viewBox="0 0 38 34" fill="none" aria-hidden="true">
          <path d="M13 2H29Q32 2 33 5L37 16Q38 21 34 21L19 21Q16 21 15 18L11 6Q10 2 13 2Z" fill="#0f50e4" />
          <path d="M8 8 13 21Q14 24 17 24L34 24M5 12 9 25Q10 28 14 28L32 28M1 15 6 29Q7 32 11 32L29 32" stroke="#0f50e4" strokeWidth="2.600" />
        </svg>
        <WatermarkText>
          <WatermarkName>精品EA</WatermarkName>
          eaclubshare.com
        </WatermarkText>
      </Watermark>
    </Desktop>
  </>
);

export default App;
